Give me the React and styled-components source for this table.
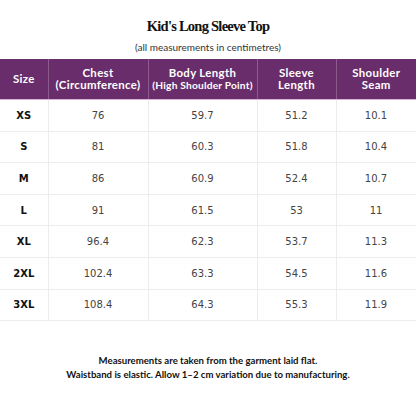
import React from "react";
import styled, { createGlobalStyle } from "styled-components";

const Global = createGlobalStyle`
  html, body { margin: 0; padding: 0; background: #fff; }
  body { width: 416px; height: 416px; overflow: hidden; }
`;

const Page = styled.div`
  width: 416px;
  height: 416px;
  display: flex;
  flex-direction: column;
  align-items: stretch;
  font-family: "Lato", sans-serif;
`;

const Title = styled.h1`
  margin: 16px 0 0;
  height: 20px;
  line-height: 20px;
  text-align: center;
  font-family: "Liberation Serif", serif;
  font-weight: 700;
  font-size: 14.5px;
  letter-spacing: -0.75px;
  color: #111;
`;

const Subtitle = styled.p`
  margin: 3px 0 0;
  height: 16px;
  line-height: 16px;
  text-align: center;
  font-family: "Lato", sans-serif;
  font-size: 10px;
  color: #333;
`;

const Table = styled.table`
  margin-top: 4px;
  width: 416px;
  border-collapse: collapse;
  table-layout: fixed;
`;

const HeadCell = styled.th`
  height: 40px;
  padding: 0;
  background: #692d6b;
  color: #fff;
  font-family: "Lato", sans-serif;
  font-weight: 700;
  font-size: 11.4px;
  line-height: 12px;
  letter-spacing: 0.35px;
  white-space: nowrap;
  text-align: center;
  border-left: 1px solid #8c5a8d;
  border-bottom: 1px solid #d9b6d6;
  &:first-child { border-left: none; }
`;

const Sub = styled.span`
  display: block;
  font-size: ${(p) => p.$size || "inherit"};
  letter-spacing: ${(p) => p.$spacing || "inherit"};
`;

const Cell = styled.td`
  height: 30.6px;
  padding: 0;
  text-align: center;
  font-family: "DejaVu Sans", sans-serif;
  font-size: 10px;
  font-weight: ${(p) => (p.$bold ? 700 : 400)};
  color: ${(p) => (p.$bold ? "#111" : "#444")};
  border-left: 1px solid #ececec;
  border-bottom: 1px solid #ececec;
  &:last-child { border-right: 1px solid #ececec; }
  &:first-child { border-left: none; }
`;

const Notes = styled.div`
  margin-top: 33px;
  text-align: center;
  font-family: "Lato", sans-serif;
  font-weight: 700;
  font-size: 9.6px;
  line-height: 14px;
  color: #111;
`;

const rows = [
  ["XS", "76", "59.7", "51.2", "10.1"],
  ["S", "81", "60.3", "51.8", "10.4"],
  ["M", "86", "60.9", "52.4", "10.7"],
  ["L", "91", "61.5", "53", "11"],
  ["XL", "96.4", "62.3", "53.7", "11.3"],
  ["2XL", "102.4", "63.3", "54.5", "11.6"],
  ["3XL", "108.4", "64.3", "55.3", "11.9"],
];

export default function App() {
  return (
    <Page>
      <Global />
      <Title>Kid's Long Sleeve Top</Title>
      <Subtitle>(all measurements in centimetres)</Subtitle>
      <Table>
        <colgroup>
          <col style={{ width: 48 }} />
          <col style={{ width: 100 }} />
          <col style={{ width: 109 }} />
          <col style={{ width: 79 }} />
          <col style={{ width: 80 }} />
        </colgroup>
        <thead>
          <tr>
            <HeadCell>Size</HeadCell>
            <HeadCell>
              <Sub>Chest</Sub>
              <Sub>(Circumference)</Sub>
            </HeadCell>
            <HeadCell>
              <Sub>Body Length</Sub>
              <Sub $size="10.2px" $spacing="0.2px">(High Shoulder Point)</Sub>
            </HeadCell>
            <HeadCell>
              <Sub>Sleeve</Sub>
              <Sub>Length</Sub>
            </HeadCell>
            <HeadCell>
              <Sub>Shoulder</Sub>
              <Sub>Seam</Sub>
            </HeadCell>
          </tr>
        </thead>
        <tbody>
          {rows.map((r) => (
            <tr key={r[0]}>
              {r.map((v, i) => (
                <Cell key={i} $bold={i === 0}>
                  {v}
                </Cell>
              ))}
            </tr>
          ))}
        </tbody>
      </Table>
      <Notes>
        Measurements are taken from the garment laid flat.
        <br />
        Waistband is elastic. Allow 1–2 cm variation due to manufacturing.
      </Notes>
    </Page>
  );
}
